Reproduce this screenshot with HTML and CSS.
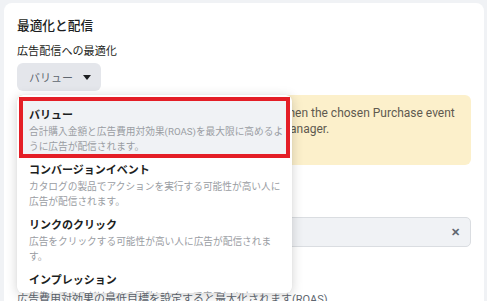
FILE: index.html
```html
<!DOCTYPE html>
<html lang="ja">
<head>
<meta charset="utf-8">
<link rel="stylesheet" href="styles.css">
</head>
<body>
<div class="card">
  <h2 class="title">最適化と配信</h2>
  <div class="label">広告配信への最適化</div>
  <div class="select-wrap">
    <button class="select">バリュー<span class="caret"></span></button>
    <div class="notice">Value optimization will be used for your ad set, when the chosen Purchase event<br>has value data and is set up within your Events Manager.</div>
    <div class="field-label">カタログ</div>
    <div class="field"><span class="field-text"></span><span class="clear">✕</span></div>
    <div class="foot">広告費用対効果の最低目標を設定すると最大化されます(ROAS)</div>

    <div class="menu">
      <div class="item active">
        <div class="item-title">バリュー</div>
        <div class="item-desc">合計購入金額と広告費用対効果(ROAS)を最大限に高めるように広告が配信されます。</div>
      </div>
      <div class="item">
        <div class="item-title">コンバージョンイベント</div>
        <div class="item-desc">カタログの製品でアクションを実行する可能性が高い人に広告が配信されます。</div>
      </div>
      <div class="item">
        <div class="item-title">リンクのクリック</div>
        <div class="item-desc">広告をクリックする可能性が高い人に広告が配信されます。</div>
      </div>
      <div class="item">
        <div class="item-title">インプレッション</div>
        <div class="item-desc">広告をできるだけ多くの回数にわたって表示します。</div>
      </div>
    </div>
  </div>
</div>
</body>
</html>
```

FILE: styles.css
```css
* { box-sizing: border-box; }
html, body { height: 100%; }
body {
  margin: 0;
  padding: 3px 3px 0 4px;
  background: #f0f2f5;
  font-family: Roboto, "Noto Sans CJK JP", sans-serif;
  color: #1c1e21;
  overflow: hidden;
}
.card {
  background: #fff;
  border-radius: 8px 8px 0 0;
  height: 100%;
  padding: 13px 13px 0 13px;
}
.title {
  margin: 0;
  font-size: 12.7px;
  font-weight: 500;
  line-height: 20px;
  color: #1c1e21;
}
.label {
  margin-top: 8px;
  font-size: 11.1px;
  line-height: 16px;
  color: #1c1e21;
}
.select-wrap {
  position: relative;
  margin-top: 3px;
}
.select {
  display: flex;
  align-items: center;
  justify-content: space-between;
  height: 28px;
  width: 84px;
  padding: 0 10px 0 12px;
  border: none;
  border-radius: 6px;
  background: #e4e6eb;
  font-family: inherit;
  font-size: 11px;
  color: #606770;
  white-space: nowrap;
}
.caret {
  width: 0;
  height: 0;
  border-left: 4px solid transparent;
  border-right: 4px solid transparent;
  border-top: 5px solid #1c1e21;
}
.notice {
  margin-top: 4px;
  width: 454px;
  height: 70px;
  padding: 11px 12px;
  background: #fcf0cb;
  border-radius: 6px;
  font-size: 12px;
  line-height: 15.5px;
  color: #5f5a50;
  white-space: nowrap;
  overflow: hidden;
}
.field-label {
  margin-top: 16px;
  font-size: 11px;
  line-height: 16px;
  color: #1c1e21;
}
.field {
  margin-top: 20px;
  width: 454px;
  height: 30px;
  display: flex;
  align-items: center;
  justify-content: flex-end;
  padding: 0 10px;
  background: #f0f2f5;
  border: 1px solid #dadde1;
  border-radius: 5px;
}
.clear {
  font-size: 11px;
  font-weight: 700;
  color: #606770;
}
.foot {
  margin-top: 45px;
  font-size: 11px;
  line-height: 16px;
  color: #606770;
}
.menu {
  position: absolute;
  top: 32px;
  left: 0;
  width: 275px;
  height: 198px;
  overflow: hidden;
  background: #fff;
  border-radius: 6px;
  box-shadow: 0 2px 12px rgba(0, 0, 0, 0.18), 0 0 1px rgba(0, 0, 0, 0.1);
  padding-top: 2px;
}
.item {
  padding: 4px 9px 4px 12px;
}
.item.active {
  margin: 0 2px;
  padding: 6px 2px 0 6px;
  border: 4px solid #e41e26;
  background: #f0f2f5;
}
.item-title {
  font-size: 11px;
  font-weight: 700;
  line-height: 17px;
  color: #1c1e21;
}
.item-desc {
  font-size: 9.7px;
  line-height: 15px;
  color: #9a9da3;
}
```
